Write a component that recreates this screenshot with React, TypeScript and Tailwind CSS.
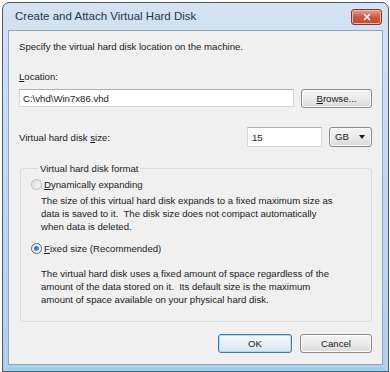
import { X } from 'lucide-react';

const font = { fontFamily: '"Liberation Sans", Arial, sans-serif' };

function Radio({ checked }: { checked?: boolean }) {
  return (
    <span
      className={
        'flex h-[11px] w-[11px] items-center justify-center rounded-full border ' +
        (checked
          ? 'border-[#5a6673] bg-gradient-to-br from-[#e4e7ea] to-[#ffffff]'
          : 'border-[#b9bec4] bg-gradient-to-br from-[#dcdfe2] to-[#f6f7f8]')
      }
    >
      {checked && <span className="h-[5px] w-[5px] rounded-full bg-gradient-to-br from-[#1a5ea8] to-[#62aae6]" />}
    </span>
  );
}

function Button({ children, primary, className = '' }: { children: React.ReactNode; primary?: boolean; className?: string }) {
  return (
    <button
      className={
        'flex items-center rounded-[3px] border text-[9.6px] leading-none text-[#1b1b1b] ' +
        (primary
          ? 'border-[#3d7bad] bg-gradient-to-b from-[#f4f8fb] via-[#e9f1f6] to-[#d5e3ec] shadow-[inset_0_0_0_1px_#a9dcf3] '
          : 'border-[#8a8a8a] bg-gradient-to-b from-[#f4f4f4] via-[#ebebeb] to-[#d8d8d8] shadow-[inset_0_0_0_1px_#fbfbfb] ') +
        className
      }
    >
      {children}
    </button>
  );
}

export default function App() {
  return (
    <div className="h-[372px] w-[390px] overflow-hidden bg-white pl-[2px] pt-[2px]" style={font}>
      <div className="flex h-[370px] w-[387px] flex-col rounded-t-[7px] border border-[#4a5b6e] bg-gradient-to-b from-[#d3e3f4] via-[#c2d7ee] to-[#b3cfec] px-[5px]">
        <div className="flex h-[27px] items-start justify-between">
          <span className="mt-[7px] pl-[7px] text-[11.5px] leading-[13px] text-[#1d3552]">Create and Attach Virtual Hard Disk</span>
          <span className="mr-[1px] mt-[6px] flex h-[16px] w-[31px] items-center justify-center rounded-[3px] border border-[#7b3a34] bg-gradient-to-b from-[#e7a392] via-[#c9583f] to-[#c44a2e] shadow-[inset_0_0_0_1px_#eab6a8]">
            <X className="h-[10px] w-[10px] text-white" strokeWidth={4} />
          </span>
        </div>

        <div className="flex h-[335px] flex-col border border-[#8ea6c0] bg-[#f0f0f0] px-[10px] text-[9.6px] leading-[13px] text-[#1b1b1b]">
          <p className="mt-[9px]">Specify the virtual hard disk location on the machine.</p>

          <p className="mt-[17px]">
            <u className="underline-offset-1">L</u>ocation:
          </p>
          <div className="mt-[6px] flex h-[19px] items-start justify-between">
            <div className="flex h-[18px] w-[275px] items-center border border-[#d4d8de] border-t-[#adb2b9] bg-white pl-[3px]">C:\vhd\Win7x86.vhd</div>
            <Button className="h-[19px] w-[71px] justify-center">
              <u className="underline-offset-1">B</u>rowse...
            </Button>
          </div>

          <div className="mt-[19px] flex h-[20px] items-center">
            <span className="flex-1">
              Virtual hard disk <u className="underline-offset-1">s</u>ize:
            </span>
            <div className="flex h-[20px] w-[75px] items-center border border-[#d4d8de] border-t-[#adb2b9] bg-white pl-[4px]">15</div>
            <Button className="ml-[7px] h-[20px] w-[43px] justify-between pl-[5px] pr-[6px]">
              <span>GB</span>
              <span className="h-0 w-0 border-x-[3.5px] border-t-[4px] border-x-transparent border-t-[#1b1b1b]" />
            </Button>
          </div>

          <fieldset className="ml-[1px] mt-[15px] rounded-[3px] border border-[#d5dde3] pb-[15px] pl-[10px]">
            <legend className="ml-[7px] px-[2px]">Virtual hard disk format</legend>
            <div className="mt-[3px] flex items-center gap-[2px]">
              <Radio />
              <span>
                <u className="underline-offset-1">D</u>ynamically expanding
              </span>
            </div>
            <p className="mt-[3px] whitespace-pre pl-[10px]">
              The size of this virtual hard disk expands to a fixed maximum size as
              <br />
              data is saved to it.  The disk size does not compact automatically
              <br />
              when data is deleted.
            </p>
            <div className="mt-[9px] flex items-center gap-[2px]">
              <Radio checked />
              <span>
                <u className="underline-offset-1">F</u>ixed size (Recommended)
              </span>
            </div>
            <p className="mt-[12px] whitespace-pre pl-[10px]">
              The virtual hard disk uses a fixed amount of space regardless of the
              <br />
              amount of the data stored on it.  Its default size is the maximum
              <br />
              amount of space available on your physical hard disk.
            </p>
          </fieldset>

          <div className="mt-[12px] flex justify-end gap-[8px]">
            <Button primary className="h-[19px] w-[74px] justify-center">
              OK
            </Button>
            <Button className="h-[19px] w-[72px] justify-center">Cancel</Button>
          </div>
        </div>
        <div className="mt-[2px] h-[3px] bg-[#8fd3ef]" />
      </div>
    </div>
  );
}
